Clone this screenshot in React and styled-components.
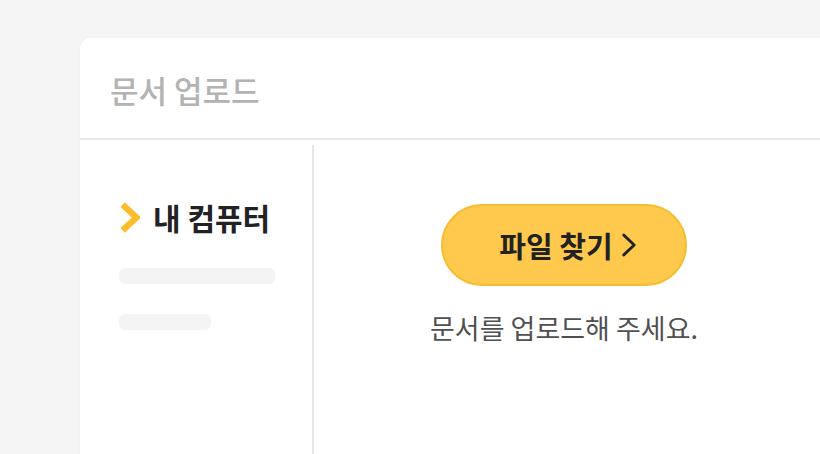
import React from 'react';
import styled, { createGlobalStyle } from 'styled-components';

const GlobalStyle = createGlobalStyle`
    html, body {
        margin: 0;
        padding: 0;
        background: #f5f5f5;
        overflow: hidden;
    }
    body {
        font-family: "Noto Sans CJK KR", "Noto Sans", sans-serif;
    }
`;

const Page = styled.div`
    width: 820px;
    height: 454px;
    padding: 38px 0 0 80px;
    box-sizing: border-box;
    overflow: hidden;
`;

const Card = styled.section`
    width: 780px;
    height: 460px;
    background: #fff;
    border-radius: 10px;
    box-shadow: 0 0 2px rgba(0, 0, 0, 0.04);
    display: flex;
    flex-direction: column;
`;

const Header = styled.header`
    height: 100px;
    flex: none;
    display: flex;
    align-items: center;
    padding-left: 30px;
    border-bottom: 2px solid #e9e9e9;
`;

const Title = styled.h1`
    margin: 0 0 -2px;
    font-size: 31px;
    font-weight: 500;
    color: #b3b3b3;
`;

const Body = styled.div`
    flex: 1;
    display: flex;
`;

const Sidebar = styled.nav`
    width: 234px;
    flex: none;
    margin-top: 5px;
    border-right: 2px solid #e6e6e6;
    padding: 57px 0 0 39px;
    box-sizing: border-box;
    display: flex;
    flex-direction: column;
`;

const MenuItem = styled.div`
    display: flex;
    align-items: center;
    gap: 13px;
    height: 30px;
`;

const MenuLabel = styled.span`
    font-size: 30px;
    font-weight: 700;
    color: #222;
    line-height: 30px;
`;

const Skeleton = styled.div`
    width: ${(p) => p.$w}px;
    height: 16px;
    border-radius: 6px;
    background: #f4f4f4;
    margin-top: ${(p) => p.$top}px;
`;

const Main = styled.main`
    width: 500px;
    display: flex;
    flex-direction: column;
    align-items: center;
    padding-top: 64px;
`;

const FindButton = styled.button`
    width: 246px;
    height: 82px;
    border-radius: 41px;
    background: #fec94c;
    border: 2px solid #f6bd31;
    display: flex;
    align-items: center;
    justify-content: center;
    gap: 8px;
    padding: 0 0 0 8px;
    font-family: inherit;
    font-size: 29px;
    font-weight: 700;
    color: #222;
    cursor: pointer;
`;

const Hint = styled.p`
    margin: 22px 0 0;
    font-size: 27px;
    color: #505050;
`;

const Chevron = ({ w, h, color, stroke, cap = 'round' }) => (
    <svg width={w} height={h} viewBox="0 0 20 29" fill="none" preserveAspectRatio="none" style={{ flex: 'none' }}>
        <path
            d="M3.5 2.5 L16.5 14.5 L3.5 26.5"
            stroke={color}
            strokeWidth={stroke}
            strokeLinecap={cap}
            strokeLinejoin={cap === 'round' ? 'round' : 'miter'}
        />
    </svg>
);

export default function App() {
    return (
        <>
            <GlobalStyle />
            <Page>
                <Card>
                    <Header>
                        <Title>문서 업로드</Title>
                    </Header>
                    <Body>
                        <Sidebar>
                            <MenuItem>
                                <Chevron w={21} h={31} color="#fbbd2c" stroke={6} cap="butt" />
                                <MenuLabel>내 컴퓨터</MenuLabel>
                            </MenuItem>
                            <Skeleton $w={156} $top={36} />
                            <Skeleton $w={92} $top={30} />
                        </Sidebar>
                        <Main>
                            <FindButton>
                                파일 찾기
                                <Chevron w={16} h={24} color="#222" stroke={3.5} />
                            </FindButton>
                            <Hint>문서를 업로드해 주세요.</Hint>
                        </Main>
                    </Body>
                </Card>
            </Page>
        </>
    );
}
